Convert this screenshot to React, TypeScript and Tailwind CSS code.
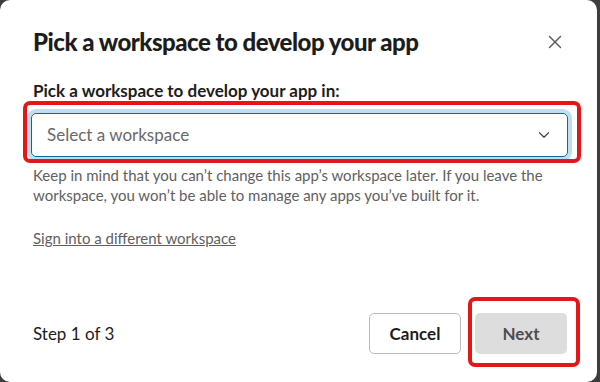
import { ChevronDown, X } from 'lucide-react'

export default function App() {
  return (
    <div className="w-[600px] h-[382px] bg-[#3d3d3d] overflow-hidden" style={{ fontFamily: 'Lato, "Noto Sans", sans-serif' }}>
      <div className="w-[597px] h-[382px] bg-white rounded-[10px] flex flex-col pl-[31px] pr-[29px]">
        {/* Header */}
        <div className="flex items-center justify-between pt-[26px]">
          <h1 className="text-[24px] leading-[32px] font-black text-[#1d1c1d] tracking-[-0.5px] pl-[2px]">
            Pick a workspace to develop your app
          </h1>
          <button className="text-[#5a5a5a] mr-[2px]">
            <X size={22} strokeWidth={1.5} />
          </button>
        </div>

        {/* Body */}
        <label className="mt-[22px] pl-[2px] text-[17px] leading-[22px] font-bold text-[#1d1c1d]">
          Pick a workspace to develop your app in:
        </label>
        <div className="relative mt-[11px]">
          <div className="h-[44px] rounded-[5px] border border-[#1264a3] ring-4 ring-[#1d9bd1]/30 flex items-center justify-between pl-[15px] pr-[14px]">
            <span className="text-[17px] text-[#696969]">Select a workspace</span>
            <ChevronDown size={18} strokeWidth={1.6} className="text-[#454545]" />
          </div>
          <div className="absolute -left-[8px] -right-[13px] -top-[12px] -bottom-[6px] border-4 border-[#e3171a] rounded-[7px] pointer-events-none" />
        </div>

        <p className="mt-[8px] pl-[2px] text-[15px] leading-[20px] text-[#616061]">
          Keep in mind that you can’t change this app’s workspace later. If you leave the workspace, you won’t be able to manage any apps you’ve built for it.
        </p>

        <a href="#" className="mt-[23px] pl-[2px] text-[15px] leading-[20px] text-[#616061] underline self-start">
          Sign into a different workspace
        </a>

        {/* Footer */}
        <div className="mt-auto mb-[28px] flex items-center justify-between">
          <span className="pl-[2px] text-[17px] text-[#1d1c1d]">Step 1 of 3</span>
          <div className="flex items-center gap-[14px] pr-[1px]">
            <button className="w-[92px] h-[41px] rounded-[5px] border border-[#bcbcbc] bg-white text-[17px] font-bold text-[#1d1c1d]">
              Cancel
            </button>
            <div className="relative">
              <button className="w-[92px] h-[41px] rounded-[5px] bg-[#dddddd] text-[17px] font-bold text-[#4d4d4d]">
                Next
              </button>
              <div className="absolute -left-[7px] -right-[13px] -top-[16px] -bottom-[13px] border-4 border-[#e3171a] rounded-[7px] pointer-events-none" />
            </div>
          </div>
        </div>
      </div>
    </div>
  )
}
